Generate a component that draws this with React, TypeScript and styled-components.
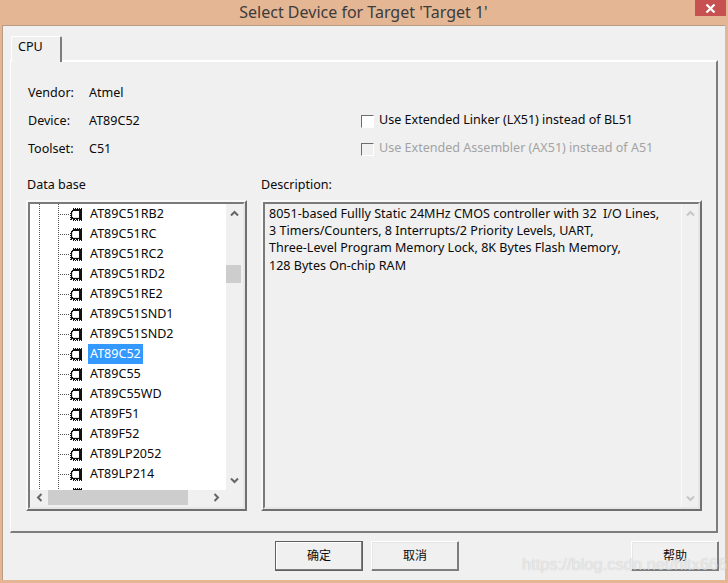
import React from "react";
import styled, { createGlobalStyle } from "styled-components";

const Global = createGlobalStyle`
  html, body { margin: 0; padding: 0; }
  body { width: 728px; height: 583px; overflow: hidden; background: #e4b694; }
`;
const FONT = `"Noto Sans", "Noto Sans CJK SC", sans-serif`;
const Win = styled.div`
  position: relative; width: 728px; height: 583px; background: #e4b694; display: flex; flex-direction: column;
  font: 12.55px/16px ${FONT}; color: #0a0a0a; box-sizing: border-box; padding: 0 3px 3px 2px; overflow: hidden;
`;
const TitleBar = styled.div`
  height: 25px; flex: none; position: relative; display: flex; align-items: center; justify-content: center;
  font-size: 16px; color: #3c3c3c; padding-bottom: 2px; box-sizing: border-box;
`;
const Close = styled.div`
  position: absolute; right: -1px; top: 0; width: 31px; height: 16px; background: #c75050; display: flex; align-items: center; justify-content: center;
`;
const Client = styled.div`
  flex: 1; background: #f0f0f0; border-top: 1px solid #b99a83; border-left: 1px solid #b99a83; padding: 10px 7px 0 7px; display: flex; flex-direction: column; min-height: 0;
`;
const TabStrip = styled.div`display: flex; height: 24px; flex: none; position: relative; z-index: 1;`;
const Tab = styled.div`
  width: 51px; height: 26px; box-sizing: border-box; border-top: 1px solid #fff; border-left: 1px solid #fff; border-right: 2px solid #7d7d7d; background: #f0f0f0;
  padding: 2px 0 0 6px; border-radius: 2px 2px 0 0; margin-left: 1px;
`;
const Panel = styled.div`
  height: 473px; flex: none; box-sizing: border-box; border-left: 1px solid #fff; border-top: 2px solid #fff; border-right: 2px solid #7d7d7d; border-bottom: 2px solid #7d7d7d;
  padding: 17px 0 0 15px; display: flex; flex-direction: column;
`;
const Info = styled.div`display: grid; grid-template-columns: 61px 272px 1fr; grid-auto-rows: 28px; align-items: center; height: 98px; flex: none; padding-left: 2px;`;
const CheckLine = styled.label<{ $off?: boolean }>`
  display: flex; align-items: center; gap: 5px; color: ${p => (p.$off ? "#a3a3a3" : "#0a0a0a")}; white-space: nowrap;
`;
const CheckText = styled.span`margin-bottom: 2px;`;
const CheckBox = styled.span`
  width: 11px; height: 11px; flex: none; border: 1px solid; border-color: #6d6d6d #fff #fff #6d6d6d; background: #fff;
`;
const CheckBoxOff = styled(CheckBox)`background: #f0f0f0;`;
const Columns = styled.div`display: grid; grid-template-columns: 221px 441px; column-gap: 14px;`;
const Caption = styled.div`height: 23px; line-height: 16px; padding-left: 1px;`;
const DescCaption = styled(Caption)`padding-left: 0;`;
const Sunken = styled.div`
  box-sizing: border-box; height: 311px; border: 2px solid; border-color: #f8f8f8 #6f6f6f #6f6f6f #f8f8f8; background: #f0f0f0;
`;
const SunkenInner = styled.div`
  position: relative; box-sizing: border-box; height: 100%; border: 2px solid; border-color: #7a7a7a #e6e6e6 #e6e6e6 #7a7a7a; overflow: hidden;
`;
const TreeGrid = styled.div`display: grid; grid-template-columns: 1fr 17px; grid-template-rows: 286px 17px; height: 303px;`;
const TreeBody = styled.div`background: #fff; overflow: hidden; position: relative;`;
const VLine = styled.div<{ $x: number }>`
  position: absolute; left: ${p => p.$x}px; top: 0; bottom: 0; width: 1px;
  background: repeating-linear-gradient(to bottom, #555 0 1px, transparent 1px 2px);
`;
const Row = styled.div`height: 20px; display: flex; align-items: center; padding-left: 28px; white-space: nowrap;`;
const Dots = styled.span`
  width: 11px; height: 1px; flex: none; margin-right: 1px;
  background: repeating-linear-gradient(to right, #555 0 1px, transparent 1px 2px);
`;
const Label = styled.span<{ $sel?: boolean }>`
  height: 20px; line-height: 20px; margin-left: 5px; padding: 0 2px; background: ${p => (p.$sel ? "#3399ff" : "transparent")}; color: ${p => (p.$sel ? "#fff" : "#0a0a0a")};
`;
const VBar = styled.div`background: #f0f0f0; position: relative; display: flex; flex-direction: column; align-items: center; justify-content: space-between; padding: 6px 0;`;
const VThumb = styled.div`position: absolute; left: 0; top: 61px; width: 15px; height: 18px; background: #cdcdcd;`;
const HBar = styled.div`background: #f0f0f0; position: relative; display: flex; align-items: center; justify-content: space-between; padding: 0 6px; height: 15px;`;
const HThumb = styled.div`position: absolute; left: 18px; top: 0; width: 140px; height: 15px; background: #cdcdcd;`;
const Corner = styled.div`background: #f0f0f0;`;
const DescBody = styled.div`height: 100%; padding: 1px 4px; box-sizing: border-box; line-height: 17.2px; white-space: pre; color: #0a0a0a;`;
const DescBar = styled.div`
  position: absolute; right: 0; top: 0; bottom: 0; width: 17px; border-left: 1px solid #fafafa; display: flex; flex-direction: column; align-items: center; justify-content: space-between; padding: 6px 0 5px; box-sizing: border-box;
`;
const Buttons = styled.div`display: grid; grid-template-columns: 88px 88px 1fr 88px; column-gap: 8px; padding: 8px 0 0 265px; margin-right: -1px;`;
const Btn = styled.div<{ $def?: boolean }>`
  height: 30px; box-sizing: border-box; display: flex; align-items: center; justify-content: center; background: #f0f0f0;
  border: 1px solid; border-color: ${p => (p.$def ? "#5f5f5f" : "#fff")} ${p => (p.$def ? "#5f5f5f" : "#7d7d7d")} ${p => (p.$def ? "#5f5f5f" : "#7d7d7d")} ${p => (p.$def ? "#5f5f5f" : "#fff")};
  box-shadow: inset -1px -1px 0 #7d7d7d, inset 1px 1px 0 ${p => (p.$def ? "#fff" : "#e6e6e6")};
  font-size: 12px; color: #0a0a0a;
`;
const Spacer = styled.div``;
const Watermark = styled.div`
  position: absolute; left: 522px; top: 554px; font: 16.5px/20px "Liberation Sans", sans-serif; color: rgba(255,255,255,.6); text-shadow: 0 0 1px rgba(0,0,0,.22); white-space: nowrap;
`;

const Arrow = ({ d, color = "#666" }: { d: string; color?: string }) => (
  <svg width="9" height="7" viewBox="0 0 9 7" fill="none"><path d={d} stroke={color} strokeWidth="2" /></svg>
);
const UP = "M1 5.5L4.5 2L8 5.5";
const DOWN = "M1 1.5L4.5 5L8 1.5";
const LeftA = () => <svg width="7" height="9" viewBox="0 0 7 9" fill="none"><path d="M5.5 1L2 4.5L5.5 8" stroke="#666" strokeWidth="2" /></svg>;
const RightA = () => <svg width="7" height="9" viewBox="0 0 7 9" fill="none"><path d="M1.5 1L5 4.5L1.5 8" stroke="#666" strokeWidth="2" /></svg>;

const Chip = () => (
  <svg width="13" height="13" viewBox="0 0 13 13" shapeRendering="crispEdges" style={{ flex: "none" }}>
    <path d="M3 1h9v11h-11v-9z" fill="#111" />
    <path d="M3 3h6v6h-6z" fill="#fff" />
    <path d="M2 4h1v5h-1zM3 9h6v1h-6z" fill="#ddd" />
    <path d="M3 0v1M5 0v1M7 0v1M9 0v1M11 0v1M3 12v1M5 12v1M7 12v1M9 12v1M11 12v1M0 5h1M0 7h1M0 9h1M0 11h1" stroke="#111" />
    <path d="M12 3h1v1h-1zM12 6h1v1h-1zM12 9h1v1h-1zM2 11h1v1h-1zM5 11h1v1h-1zM8 11h1v1h-1z" fill="#fff" />
  </svg>
);

const DEVICES = ["AT89C51RB2","AT89C51RC","AT89C51RC2","AT89C51RD2","AT89C51RE2","AT89C51SND1","AT89C51SND2","AT89C52","AT89C55","AT89C55WD","AT89F51","AT89F52","AT89LP2052","AT89LP214"];
const DESC = `8051-based Fullly Static 24MHz CMOS controller with 32  I/O Lines,
3 Timers/Counters, 8 Interrupts/2 Priority Levels, UART,
Three-Level Program Memory Lock, 8K Bytes Flash Memory,
128 Bytes On-chip RAM`;

export default function App() {
  return (
    <Win>
      <Global />
      <TitleBar>
        Select Device for Target 'Target 1'
        <Close>
          <svg width="11" height="9" viewBox="0 0 11 9"><path d="M1.5 .5L9.5 8.5M9.5 .5L1.5 8.5" stroke="#fff" strokeWidth="2.2" /></svg>
        </Close>
      </TitleBar>
      <Client>
        <TabStrip><Tab>CPU</Tab></TabStrip>
        <Panel>
          <Info>
            <span>Vendor:</span><span>Atmel</span><span />
            <span>Device:</span><span>AT89C52</span>
            <CheckLine><CheckBox /><CheckText>Use Extended Linker (LX51) instead of BL51</CheckText></CheckLine>
            <span>Toolset:</span><span>C51</span>
            <CheckLine $off><CheckBoxOff /><CheckText>Use Extended Assembler (AX51) instead of A51</CheckText></CheckLine>
          </Info>
          <Columns>
            <div>
              <Caption>Data base</Caption>
              <Sunken>
                <SunkenInner>
                  <TreeGrid>
                    <TreeBody>
                      <VLine $x={9} />
                      <VLine $x={28} />
                      {DEVICES.map(d => (
                        <Row key={d}>
                          <Dots /><Chip />
                          <Label $sel={d === "AT89C52"}>{d}</Label>
                        </Row>
                      ))}
                      <Row><Dots /><Chip /></Row>
                    </TreeBody>
                    <VBar><Arrow d={UP} /><VThumb /><Arrow d={DOWN} /></VBar>
                    <HBar><LeftA /><HThumb /><RightA /></HBar>
                    <Corner />
                  </TreeGrid>
                </SunkenInner>
              </Sunken>
            </div>
            <div>
              <DescCaption>Description:</DescCaption>
              <Sunken>
                <SunkenInner>
                  <DescBody>{DESC}</DescBody>
                  <DescBar><Arrow d={UP} color="#c6c6c6" /><Arrow d={DOWN} color="#c6c6c6" /></DescBar>
                </SunkenInner>
              </Sunken>
            </div>
          </Columns>
        </Panel>
        <Buttons>
          <Btn $def>确定</Btn>
          <Btn>取消</Btn>
          <Spacer />
          <Btn>帮助</Btn>
        </Buttons>
      </Client>
      <Watermark>https://blog.csdn.net/hltx666</Watermark>
    </Win>
  );
}
